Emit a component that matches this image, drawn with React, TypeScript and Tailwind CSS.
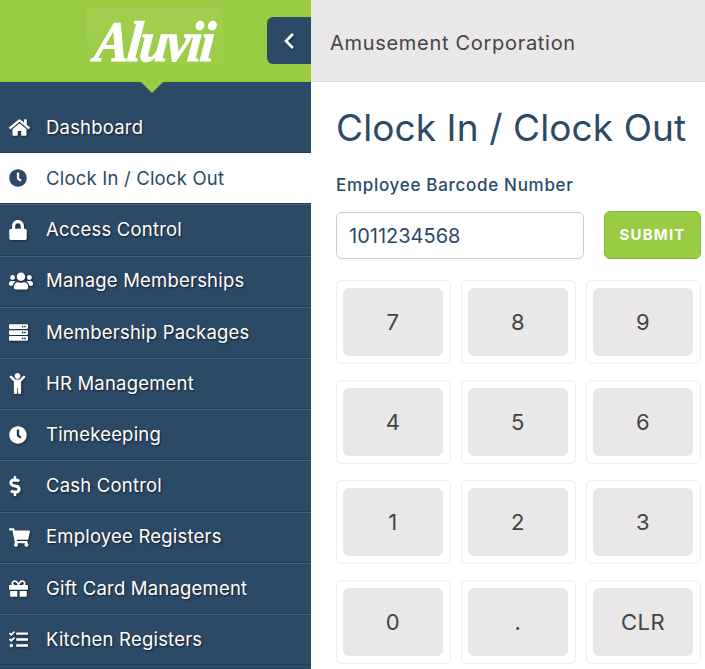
import { FaHome, FaClock, FaLock, FaUsers, FaServer, FaChild, FaDollarSign, FaShoppingCart, FaGift, FaTasks, FaChevronLeft } from "react-icons/fa";

const navItems = [
  { label: "Dashboard", icon: FaHome, size: 21 },
  { label: "Clock In / Clock Out", icon: FaClock, size: 18, active: true },
  { label: "Access Control", icon: FaLock, size: 20, iconClass: "-ml-px" },
  { label: "Manage Memberships", icon: FaUsers, size: 24 },
  { label: "Membership Packages", icon: FaServer, size: 19 },
  { label: "HR Management", icon: FaChild, size: 21, iconClass: "-ml-[2px]" },
  { label: "Timekeeping", icon: FaClock, size: 18 },
  { label: "Cash Control", icon: FaDollarSign, size: 20, iconClass: "-ml-1" },
  { label: "Employee Registers", icon: FaShoppingCart, size: 21 },
  { label: "Gift Card Management", icon: FaGift, size: 19 },
  { label: "Kitchen Registers", icon: FaTasks, size: 19 },
];

const keys = ["7", "8", "9", "4", "5", "6", "1", "2", "3", "0", ".", "CLR"];

const App = () => {
  return (
    <div className="flex h-[669px] w-[705px] overflow-hidden bg-white font-['Inter',sans-serif]">
      {/* Sidebar */}
      <aside className="flex w-[311px] shrink-0 flex-col bg-[#2c4a66]">
        <div className="relative flex h-[82px] shrink-0 bg-[#99cc42]">
          <div className="ml-[86px] mt-2 flex h-[68px] w-[137px] items-center justify-center rounded-md bg-gradient-to-b from-[#a0cf4e] to-[#99cc44]">
            <span className="-skew-x-6 scale-y-110 font-['Liberation_Serif',serif] text-[52px] font-bold italic leading-none tracking-[-2px] text-white [-webkit-text-stroke:1px_white]">
              Aluvii
            </span>
          </div>
          <button className="absolute right-0 top-[17px] flex h-[47px] w-11 items-center justify-center rounded-l-md bg-[#2c4a66] text-white">
            <span className="[filter:drop-shadow(1px_1px_1px_rgba(0,0,0,0.5))]">
              <FaChevronLeft size={18} />
            </span>
          </button>
          <div className="absolute left-[141px] top-[82px] h-0 w-0 border-x-[11px] border-t-[11px] border-x-transparent border-t-[#99cc42]" />
        </div>
        <nav className="flex flex-col pt-5">
          {navItems.map((item) => {
            const Icon = item.icon;
            return (
              <div
                key={item.label}
                className={
                  item.active
                    ? "flex h-[51.2px] shrink-0 items-center border-b border-[#243e57] bg-white text-[#2c4a66]"
                    : "flex h-[51.2px] shrink-0 items-center border-t border-b border-t-[#46627d] border-b-[#243e57] text-white first:border-t-transparent [text-shadow:1px_1px_2px_rgba(0,0,0,0.6)]"
                }
              >
                <span
                  className={
                    item.active
                      ? "flex w-[46px] shrink-0 items-center pl-[9px]"
                      : "flex w-[46px] shrink-0 items-center pl-[9px] [filter:drop-shadow(1px_1px_1px_rgba(0,0,0,0.5))]"
                  }
                >
                  <Icon size={item.size} className={item.iconClass} />
                </span>
                <span className="pb-px text-[18.5px] leading-none tracking-[0.2px]">{item.label}</span>
              </div>
            );
          })}
        </nav>
      </aside>

      {/* Main */}
      <main className="flex min-w-0 flex-1 flex-col">
        <header className="flex h-[82px] shrink-0 items-center border-b border-[#dddddd] bg-[#e9e7e8] pl-[19px] pt-1 text-[20px] tracking-[0.7px] text-[#444444]">
          Amusement Corporation
        </header>
        <div className="flex flex-col pl-[25px] pr-1">
          <h1 className="mt-[25px] text-[37px] font-normal leading-[42px] tracking-[0.1px] text-[#2c4a66]">Clock In / Clock Out</h1>
          <label className="mt-[26px] text-[17px] font-medium leading-5 tracking-[0.7px] text-[#2c4a66]">Employee Barcode Number</label>
          <div className="mt-4 flex items-start gap-5">
            <input
              readOnly
              value="1011234568"
              className="mt-px h-[47px] w-[248px] rounded-md border border-[#cccccc] px-3 text-[20px] text-[#2c4a66]"
            />
            <button className="h-12 w-[97px] rounded-md border border-[#88b83a] bg-[#99cc42] text-[15px] font-bold tracking-[1.2px] text-white">
              SUBMIT
            </button>
          </div>
          <div className="mt-[21px] grid grid-cols-3 gap-x-[10px] gap-y-4">
            {keys.map((k) => (
              <div key={k} className="h-[84px] rounded-md border border-[#eeeeee] pb-[7px] pl-[6px] pr-[7px] pt-[7px]">
                <div className="flex h-[68px] items-center justify-center rounded-md bg-[#e9e7e8] pt-px text-[22px] tracking-[0.5px] text-[#444444]">
                  {k}
                </div>
              </div>
            ))}
          </div>
        </div>
      </main>
    </div>
  );
};

export default App;
